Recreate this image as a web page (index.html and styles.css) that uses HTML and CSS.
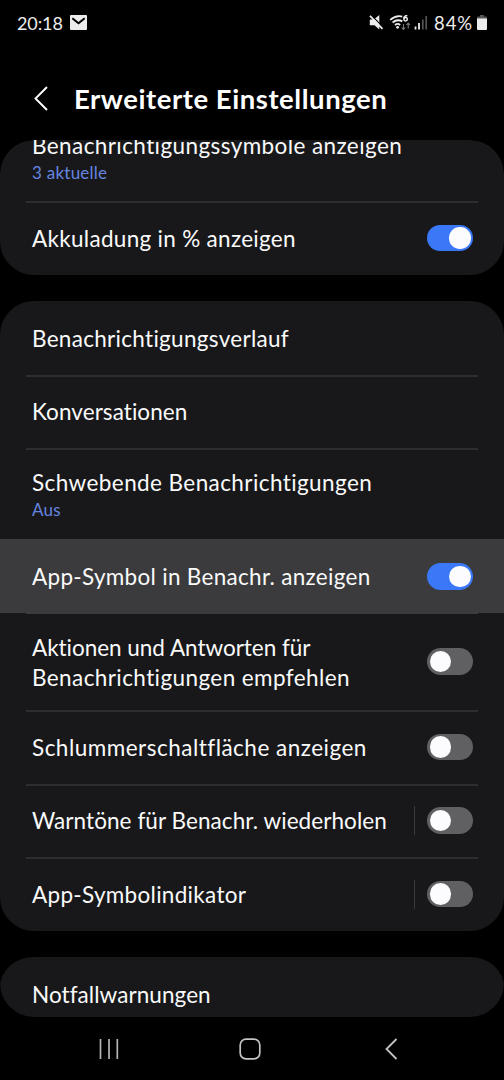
FILE: index.html
```
<!DOCTYPE html>
<html lang="de">
<head>
<meta charset="utf-8">
<title>Erweiterte Einstellungen</title>
<link rel="stylesheet" href="styles.css">
</head>
<body>
<div class="phone">
  <header class="status">
    <span class="clock">20:18</span>
    <svg class="mail" width="17" height="15" viewBox="0 0 17 15"><rect width="17" height="15" rx="1" fill="#ececec"/><path d="M2.300 3.200 8.500 8.200l6.200-5" fill="none" stroke="#000" stroke-width="2"/></svg>
    <svg class="sysicons" width="60" height="18" viewBox="0 0 60 18">
      <path d="M.8 5.500h4L10.300 1v14.500L5.500 11.300H.8z" fill="#ededed"/>
      <path d="M2.200 1.100 14.500 13.600" stroke="#000" stroke-width="1.300"/>
      <path d="M1 1.800 13.500 14.800" stroke="#ededed" stroke-width="1.700"/>
      <g fill="none" stroke="#ededed" stroke-width="1.800"><path d="M21.200 5.900Q27 .9 33.300 2.600M23.600 8.500Q28.500 4.600 33.300 7.400M26 10.900Q28.600 9 31.200 10.900"/></g>
      <circle cx="28.600" cy="13.300" r="1.400" fill="#ededed"/>
      <path d="M38.300 1.800C35.800 1.200 34.800 3 34.800 4.800" fill="none" stroke="#ededed" stroke-width="1.500"/><circle cx="36.600" cy="5.200" r="1.700" fill="none" stroke="#ededed" stroke-width="1.500"/>
      <path d="M34.500 10v5.500m-1.800-2 1.800 2 1.800-2M39.200 14.500V9m-1.800 2 1.800-2 1.800 2" fill="none" stroke="#777" stroke-width="1.100"/>
      <path d="M46.500 12.500V15.500" stroke="#ededed" stroke-width="1.800"/><path d="M50 9v6.500" stroke="#ededed" stroke-width="1.800"/><path d="M53.800 5.500v10M57.200 2v13.500" stroke="#555" stroke-width="1.700"/>
    </svg>
    <span class="percent">84%</span>
    <svg class="battery" width="10" height="15" viewBox="0 0 10 15"><path d="M3 0h4v1.500h2a1 1 0 0 1 1 1V4H0V2.500a1 1 0 0 1 1-1h2z" fill="#555"/><path d="M0 3.500h10V14a1 1 0 0 1-1 1H1a1 1 0 0 1-1-1z" fill="#ededed"/></svg>
  </header>
  <div class="titlebar">
    <svg class="back" width="16" height="26" viewBox="0 0 16 26"><path d="M14 1 2.500 12.500 14 24" fill="none" stroke="#fff" stroke-width="1.900"/></svg>
    <h1 class="title">Erweiterte Einstellungen</h1>
  </div>
  <main class="list">
    <section class="card card-first">
      <div class="row row-icons"><div class="label"><span class="wide">Benachrichtigungssymbole anzeigen</span><small>3 aktuelle</small></div></div>
      <div class="row"><div class="label"><span>Akkuladung in % anzeigen</span></div><i class="switch on"></i></div>
    </section>
    <section class="card card-main">
      <div class="row"><div class="label"><span>Benachrichtigungsverlauf</span></div></div>
      <div class="row"><div class="label"><span class="snug">Konversationen</span></div></div>
      <div class="row row-sub"><div class="label"><span class="wide">Schwebende Benachrichtigungen</span><small>Aus</small></div></div>
      <div class="row pressed"><div class="label"><span>App-Symbol in Benachr. anzeigen</span></div><i class="switch on"></i></div>
      <div class="row row-two"><div class="label"><span class="tight">Aktionen und Antworten für</span><span class="wide">Benachrichtigungen empfehlen</span></div><i class="switch"></i></div>
      <div class="row"><div class="label"><span class="wider">Schlummerschaltfläche anzeigen</span></div><i class="switch"></i></div>
      <div class="row"><div class="label"><span class="snug">Warntöne für Benachr. wiederholen</span></div><b class="sep"></b><i class="switch"></i></div>
      <div class="row"><div class="label"><span>App-Symbolindikator</span></div><b class="sep"></b><i class="switch"></i></div>
    </section>
    <section class="card card-last">
      <div class="row"><div class="label"><span class="snug">Notfallwarnungen</span></div></div>
    </section>
  </main>
  <nav class="navbar">
    <svg width="22" height="22" viewBox="0 0 22 22"><path d="M2.500 1v20M11 1v20M19.300 1v20" stroke="#b4b4b4" stroke-width="1.700"/></svg>
    <svg width="22" height="22" viewBox="0 0 22 22"><rect x="1.200" y="1.200" width="19.600" height="19.600" rx="5.800" fill="none" stroke="#c4c4c4" stroke-width="1.700"/></svg>
    <svg width="22" height="22" viewBox="0 0 22 22"><path d="M16.500 1 6.500 11l10 10" fill="none" stroke="#c4c4c4" stroke-width="1.800"/></svg>
  </nav>
</div>
</body>
</html>
```
FILE: styles.css
```
* { box-sizing: border-box; }
body { margin: 0; background: #000; color: #fafafa; font-family: Lato, "Open Sans", sans-serif; font-variant-ligatures: none; }
.phone { width: 504px; height: 1080px; display: flex; flex-direction: column; overflow: hidden; background: #000; }
svg { display: block; flex: none; }
.status { height: 45px; display: flex; align-items: center; padding: 0 17px 0 17px; font-size: 18px; color: #ededed; }
.clock { width: 46px; white-space: nowrap; letter-spacing: -0.1px; }
.mail { margin-left: 7px; }
.sysicons { margin-left: auto; }
.percent { margin-left: 5px; width: 39px; font-size: 18.500px; letter-spacing: 0.900px; white-space: nowrap; }
.battery { margin-left: 4px; }
.titlebar { height: 95px; display: flex; align-items: center; padding: 12px 0 0 33px; }
.title { margin: 0 0 0 25px; font-size: 27.500px; line-height: 32px; font-weight: 700; letter-spacing: 0.550px; color: #fff; white-space: nowrap; }
.list { height: 877px; overflow: hidden; display: flex; flex-direction: column; border-radius: 34px; }
.card { flex: none; background: #18181a; border-radius: 34px; overflow: hidden; }
.card-first { height: 134.500px; display: flex; flex-direction: column; justify-content: flex-end; }
.card-first .row:last-child { height: 73.200px; }
.card-main { margin-top: 26.500px; }
.card-last { margin-top: 26px; height: 60px; border-radius: 34px / 30px; }
.row { position: relative; height: 73.600px; flex: none; display: flex; align-items: center; padding: 0 31px 0 32px; }
.row + .row::before { content: ""; position: absolute; left: 26px; right: 26px; top: 0; height: 2px; background: #2e2e30; }
.row-sub { height: 91.300px; }
.row-icons { height: 89.500px; }
.row-two { height: 97px; }
.pressed { background: #3b3b3d; }
.row.pressed::before { display: none; }
.row.pressed + .row::before { height: 1px; background: #3b3b3d; }
.label { flex: 1; display: flex; flex-direction: column; padding-top: 2px; font-size: 22.500px; line-height: 30px; letter-spacing: 0.300px; white-space: nowrap; }
.wide { letter-spacing: 0.410px; }
.wider { letter-spacing: 0.490px; }
.snug { letter-spacing: 0.070px; }
.tight { letter-spacing: -0.030px; }
.label small { font-size: 17px; line-height: 24px; letter-spacing: 0.250px; color: #6585e0; }
.switch { width: 46px; height: 26.500px; flex: none; border-radius: 14px; background: #606062; padding: 2.500px; display: flex; }
.switch::after { content: ""; width: 21.500px; height: 21.500px; border-radius: 50%; background: #fcfcff; }
.switch.on { background: #3a78f8; justify-content: flex-end; }
.sep { width: 1px; height: 29px; margin-right: 12px; background: #3a3a3c; }
.navbar { height: 63px; display: flex; justify-content: space-between; align-items: center; padding: 0 102px 0 98px; }
```
